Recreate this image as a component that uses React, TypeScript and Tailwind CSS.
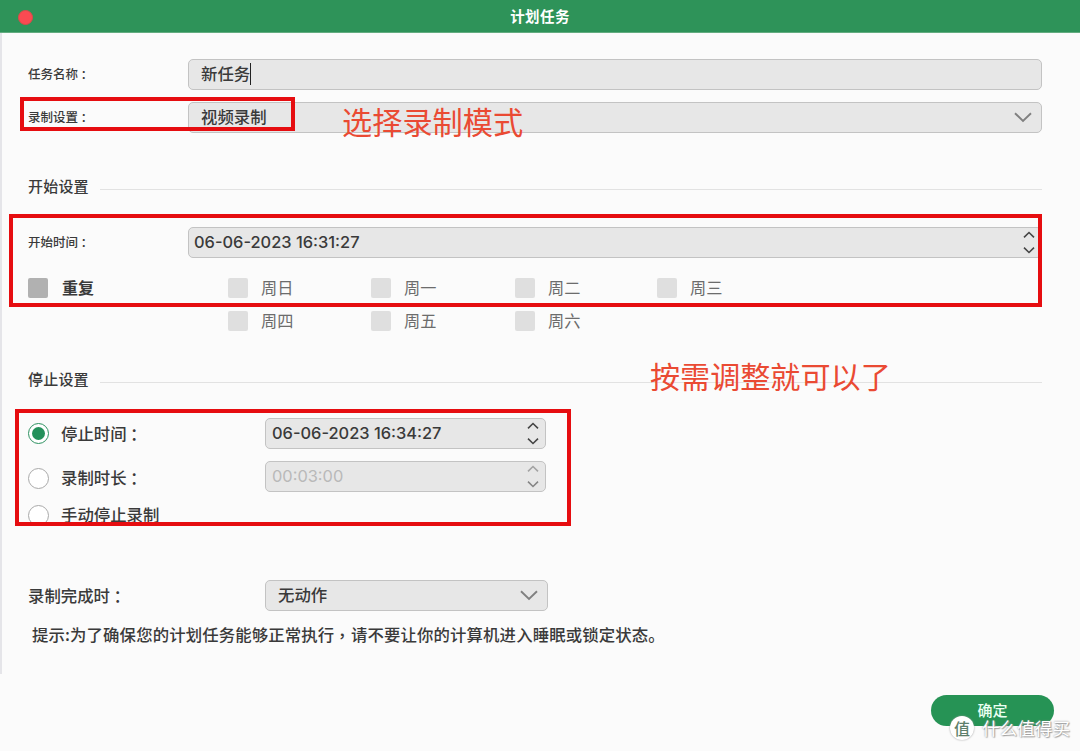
import type { ReactNode } from 'react'
import clsx from 'clsx'

const DAYS = ['周日', '周一', '周二', '周三', '周四', '周五', '周六']

function Mark({ children }: { children: ReactNode }) {
  return (
    <span className="inline-block translate-x-[-0.5px] translate-y-px leading-none font-['Noto_Sans_CJK_TC',sans-serif]">
      {children}
    </span>
  )
}

function Field({
  className,
  children,
}: {
  className?: string
  children?: ReactNode
}) {
  return (
    <div
      className={clsx(
        'flex items-center justify-between h-[31px] rounded-[5px] border border-[#c3c3c3] bg-[#e7e7e7]',
        className,
      )}
    >
      {children}
    </div>
  )
}

function Chevron() {
  return (
    <svg width="18" height="11" viewBox="0 0 18 11" fill="none">
      <path d="M1 1.2 9 9l8-7.8" stroke="#808080" strokeWidth="1.9" />
    </svg>
  )
}

function Stepper({ disabled = false }: { disabled?: boolean }) {
  return (
    <svg width="12" height="24" viewBox="0 0 12 24" fill="none" strokeWidth="1.6">
      <path d="M1 6.3 6 1.5l5 4.8" stroke={disabled ? '#a3a3a3' : '#454545'} />
      <path d="m1 16.7 5 4.8 5-4.8" stroke={disabled ? '#858585' : '#454545'} />
    </svg>
  )
}

function SectionTitle({ children }: { children: ReactNode }) {
  return (
    <div className="flex items-center h-6 mr-[38px]">
      <h2 className="w-[72px] text-[15px] font-medium tracking-[0.2px] leading-6">
        {children}
      </h2>
      <div className="flex-1 h-px mt-[7px] bg-[#e2e2e2]" />
    </div>
  )
}

function Radio({ checked = false }: { checked?: boolean }) {
  return (
    <div
      className={clsx(
        'flex items-center justify-center w-[21px] h-[21px] mr-[12px] rounded-full border bg-white',
        checked ? 'border-[1.5px] border-[#2d9160]' : 'border-[#a9a9a9]',
      )}
    >
      {checked && <div className="w-[13px] h-[13px] rounded-full bg-[#23905a]" />}
    </div>
  )
}

function Outline({ className }: { className: string }) {
  return (
    <div
      className={clsx(
        'absolute border-4 border-[#e60d10] pointer-events-none',
        className,
      )}
    />
  )
}

export default function App() {
  return (
    <div className="relative flex flex-col w-[1080px] h-[751px] overflow-hidden bg-[#fbfbfb] text-[#3a3a3a] font-['Noto_Sans_CJK_SC',sans-serif]">
      <header className="relative flex items-center justify-center h-[33px] bg-[#2e9359] border-b border-[#63ac80]">
        <div className="absolute left-[18px] top-[10px] w-[15px] h-[15px] rounded-full bg-[#fa4a52] border border-[#dc4a48]" />
        <h1 className="text-[14.5px] font-bold tracking-[0.4px] text-white">
          计划任务
        </h1>
      </header>

      <main className="flex flex-col h-[641px] pl-[26px] border-l-2 border-[#e5e5e9]">
        <div className="flex items-center mt-[26px] h-[31px]">
          <span className="w-40 text-[12.5px] font-medium">
            任务名称<Mark>：</Mark>
          </span>
          <Field className="w-[854px] pl-3">
            <div className="flex items-center h-[25px] mb-[2px] text-[16.4px] font-medium">
              新任务
              <span className="w-px h-[22px] bg-[#222]" />
            </div>
          </Field>
        </div>

        <div className="flex items-center mt-3 h-[31px]">
          <span className="w-40 text-[12.5px] font-medium">
            录制设置<Mark>：</Mark>
          </span>
          <Field className="w-[854px] pl-3 pr-[9px]">
            <span className="pb-[2px] text-[16.4px] font-medium">视频录制</span>
            <Chevron />
          </Field>
        </div>

        <div className="mt-[41px]">
          <SectionTitle>开始设置</SectionTitle>
        </div>

        <div className="flex items-center mt-[29px] h-[31px]">
          <span className="w-40 text-[12.5px] font-medium">
            开始时间<Mark>：</Mark>
          </span>
          <Field className="w-[854px] pl-[5px] pr-[6px]">
            <span className="font-['Inter',sans-serif] text-[16.4px] font-medium">
              06-06-2023 16:31:27
            </span>
            <Stepper />
          </Field>
        </div>

        <div className="flex mt-[20px]">
          <div className="flex items-center w-[200px] h-5">
            <div className="w-5 h-5 mr-[14px] rounded-[2px] bg-[#b1b1b1]" />
            <span className="pb-[2px] text-[16px] font-bold">重复</span>
          </div>
          <div className="grid grid-cols-[143px_144px_142px_100px] gap-y-[13px]">
            {DAYS.map((day) => (
              <div key={day} className="flex items-center h-5 text-[#6c6c6c]">
                <div className="w-5 h-5 mr-[13px] rounded-[2px] bg-[#dfdfdf]" />
                <span className="pb-px text-[16.2px]">{day}</span>
              </div>
            ))}
          </div>
        </div>

        <div className="mt-[36px]">
          <SectionTitle>停止设置</SectionTitle>
        </div>

        <div className="flex items-center mt-[27px] h-[31px]">
          <div className="flex items-center w-[237px] pt-px text-[16.4px] font-medium">
            <Radio checked />
            <span className="pb-[2px]">
              停止时间<Mark>：</Mark>
            </span>
          </div>
          <Field className="w-[281px] pl-[6px] pr-[6px]">
            <span className="pb-px font-['Inter',sans-serif] text-[16.4px] font-medium">
              06-06-2023 16:34:27
            </span>
            <Stepper />
          </Field>
        </div>

        <div className="flex items-center mt-[12px] h-[31px]">
          <div className="flex items-center w-[237px] pt-1 text-[16.4px] font-medium">
            <Radio />
            <span className="pb-[2px]">
              录制时长<Mark>：</Mark>
            </span>
          </div>
          <Field className="w-[281px] pl-[6px] pr-[6px]">
            <span className="font-['Inter',sans-serif] text-[16.4px] text-[#b9b9b9]">
              00:03:00
            </span>
            <Stepper disabled />
          </Field>
        </div>

        <div className="flex items-center mt-[12px] h-[22px] text-[16.4px] font-medium">
          <Radio />
          <span className="pb-px">手动停止录制</span>
        </div>

        <div className="flex items-center mt-[54px] h-[31px]">
          <span className="w-[237px] pb-px text-[16.4px] font-medium">
            录制完成时<Mark>：</Mark>
          </span>
          <Field className="w-[283px] pl-3 pr-[9px]">
            <span className="pb-[2px] text-[16.4px] font-medium">无动作</span>
            <Chevron />
          </Field>
        </div>

        <p className="mt-[11px] pl-[4px] text-[16.4px] leading-6 font-medium tracking-[0.13px]">
          提示:为了确保您的计划任务能够正常执行<Mark>，</Mark>
          请不要让你的计算机进入睡眠或锁定状态。
        </p>
      </main>

      <footer className="flex justify-end pt-[21px] pr-[26px]">
        <button className="w-[123px] h-[31px] rounded-full bg-[#269355] text-[15px] font-medium text-[#eafff2]">
          确定
        </button>
      </footer>

      <Outline className="left-[20px] top-[97px] w-[275px] h-[34px]" />
      <Outline className="left-[9px] top-[214px] w-[1033px] h-[93px]" />
      <Outline className="left-[15px] top-[409px] w-[556px] h-[117px]" />

      <span className="absolute left-[342px] top-[99px] text-[30.2px] leading-[44px] text-[#ea4a33]">
        选择录制模式
      </span>
      <span className="absolute left-[650px] top-[353px] text-[30.1px] leading-[44px] text-[#ea4a33]">
        按需调整就可以了
      </span>

      <div className="absolute left-[950px] top-[716px] flex items-center h-6">
        <div className="flex items-center justify-center w-6 h-6 rounded-full bg-white shadow-[0_0_2px_#999] text-[16px] leading-6 font-medium text-[#5f7f6c]">
          值
        </div>
        <span className="ml-[8px] text-[17.6px] leading-6 text-white [text-shadow:0_0_2px_#888,1px_1px_1px_#aaa]">
          什么值得买
        </span>
      </div>
    </div>
  )
}
